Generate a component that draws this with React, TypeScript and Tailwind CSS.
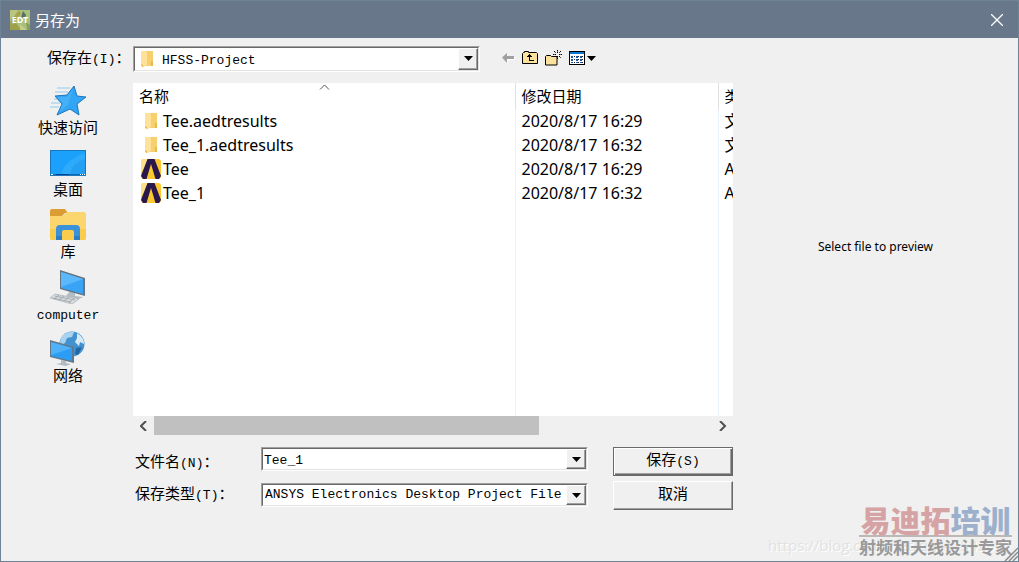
import { useState, type ReactNode } from "react";

const sidebarItems = [
  { label: "快速访问", icon: <QuickAccessIcon /> },
  { label: "桌面", icon: <DesktopIcon /> },
  { label: "库", icon: <LibraryIcon /> },
  { label: "computer", icon: <ComputerIcon /> },
  { label: "网络", icon: <NetworkIcon /> },
];

const files = [
  { name: "Tee.aedtresults", date: "2020/8/17 16:29", type: "文件夹", folder: true },
  { name: "Tee_1.aedtresults", date: "2020/8/17 16:32", type: "文件夹", folder: true },
  { name: "Tee", date: "2020/8/17 16:29", type: "ANSYS", folder: false },
  { name: "Tee_1", date: "2020/8/17 16:32", type: "ANSYS", folder: false },
];

function EdtIcon() {
  return (
    <svg width="20" height="20" viewBox="0 0 20 20" aria-hidden="true">
      <rect width="20" height="20" fill="#a9bf7c" />
      <path d="M0 0h8L3 8H0z" fill="#b9c67c" />
      <path d="M9 0L0 12v4L11 4z" fill="#a8a24c" />
      <path d="M0 15l6-2 5 7H0z" fill="#9fa04a" />
      <path d="M10 14l7 6h-7z" fill="#c3cf86" />
      <path d="M13 1l3 4-1 3h-4z" fill="#56706a" />
      <path d="M16 12l4 3v5h-3z" fill="#86a05c" />
      <text x="10" y="13" textAnchor="middle" fontSize="9" fontWeight="700" fill="#fff" fontFamily="Noto Sans">
        EDT
      </text>
    </svg>
  );
}

function FolderIcon() {
  return (
    <svg width="14" height="18" viewBox="0 0 14 18" aria-hidden="true">
      <path d="M4 1h9v15H4z" fill="#f6cf6f" />
      <path d="M11 11h2v5h-2z" fill="#e9b949" />
      <path d="M1 1h5l1 2v12l-4 2.500L1 15z" fill="#ffe199" />
      <path d="M1 14l2 1v2.500L1 15.500z" fill="#eebf55" />
    </svg>
  );
}

function AnsysIcon() {
  return (
    <svg width="20" height="20" viewBox="0 0 20 20" aria-hidden="true">
      <rect width="20" height="20" rx="3" fill="#fbc82f" />
      <path d="M0 3q0-3 3-3h5L0 14z" fill="#fde08a" />
      <path d="M6.500 0h7L20 17l-2 3h-3.500L10 5 5.500 20H2L0 17z" fill="#2a174c" />
    </svg>
  );
}

function QuickAccessIcon() {
  return (
    <svg width="38" height="32" viewBox="0 0 38 32" aria-hidden="true">
      <path d="M8 3h13M6 7h13M2 18h9M1 22h9M5 14h7" stroke="#8fcaf0" strokeWidth="1" />
      <path d="M25 1l3 10 9 1-9 7 2 11-9-6-13 6 5-11-7-8 12-1z" fill="#32a5f5" stroke="#1b78bd" strokeWidth="1" strokeLinejoin="round" />
      <path d="M24 4l-6 8-10 0 6 6-4 9 9-7z" fill="#58bafa" opacity=".5" />
    </svg>
  );
}

function DesktopIcon() {
  return (
    <svg width="36" height="26" viewBox="0 0 36 26" aria-hidden="true">
      <rect x=".5" y=".5" width="35" height="25" fill="#1ba1fb" stroke="#1877bd" />
      <path d="M11 24Q15 10 35 3v21z" fill="#2eaafb" />
      <path d="M20 24Q22 13 35 9v15z" fill="#249ff2" />
      <path d="M1 24h34v1H1z" fill="#0c6cb8" />
      <path d="M6 24h13v1H6z" fill="#063f8c" />
      <path d="M1 24h2v1H1zM30 24h1v1h-1zM32 24h1v1h-1zM34 24h1v1h-1z" fill="#fff" />
    </svg>
  );
}

function LibraryIcon() {
  return (
    <svg width="36" height="32" viewBox="0 0 36 32" aria-hidden="true">
      <path d="M0 2q0-2 2-2h13l3 4h-3l-3 3H0z" fill="#dc9d35" />
      <path d="M0 7h13l4-4h17q2 0 2 2v24q0 2-2 2H2q-2 0-2-2z" fill="#fbd56e" />
      <path d="M0 20h36v9q0 2-2 2H2q-2 0-2-2z" fill="#f9cc4b" />
      <path d="M6 31V20q0-4 4-4h16q4 0 4 4v11h-6v-8q0-2-2-2h-8q-2 0-2 2v8z" fill="#3c92d8" />
      <path d="M6 27h6v4H6zM24 27h6v4h-6z" fill="#2d7dc4" />
    </svg>
  );
}

function ComputerIcon() {
  return (
    <svg width="38" height="34" viewBox="0 0 38 34" aria-hidden="true">
      <path d="M21 21l5 2v3l8 1-4 2-13-3z" fill="#b5bdc4" />
      <path d="M11 0l25 8v18l-25-7z" fill="#657582" />
      <path d="M12 2l22 7v15l-22-6z" fill="#39a4f6" />
      <path d="M12 2l22 7L12 17z" fill="#5bb8fb" />
      <path d="M6 24l24 5-7 5-22-6z" fill="#d9dde0" stroke="#a5adb3" strokeWidth=".7" />
      <path d="M6 26l20 4M4 28l18 4M10 25l-5 4M15 26l-5 4M20 27l-5 4M25 28l-5 5" stroke="#929aa1" strokeWidth=".7" />
    </svg>
  );
}

function NetworkIcon() {
  return (
    <svg width="36" height="36" viewBox="0 0 36 36" aria-hidden="true">
      <circle cx="22" cy="13" r="12.500" fill="#4391cf" />
      <path d="M12 5q6-5 12-4l-2 5-5 1-2 5-4 2q-2-4 1-9z" fill="#a9d4ee" />
      <path d="M27 2q7 4 7 11l-4-2-1 4-4-4 2-4z" fill="#d8eaf5" />
      <path d="M26 17l6-1-4 8-3-1z" fill="#1f67a5" />
      <path d="M11 29l5 1v2l5 1-5 2-10-2 5-1z" fill="#b3bbc1" />
      <path d="M0 9l24 7v16L0 26z" fill="#637787" />
      <path d="M1 11l21 6v13L1 25z" fill="#2c9df4" />
      <path d="M1 11l21 6L1 24z" fill="#4fb1fa" />
    </svg>
  );
}

function BackIcon() {
  return (
    <svg width="13" height="12" viewBox="0 0 13 12" aria-hidden="true">
      <path d="M1 6.500L6 2v3h7v3H6v4z" fill="#fff" />
      <path d="M0 5.500L5 1v3h7v3H5v4z" fill="#a0a0a0" />
    </svg>
  );
}

function UpIcon() {
  return (
    <svg width="16" height="14" viewBox="0 0 16 14" aria-hidden="true">
      <path d="M.5 12.500V2.500l1-1h1v-1h4v1h8l1 1v10z" fill="#fbe29c" stroke="#000" />
      <path d="M7 3h1v1h1v1h1v1H8v3h4v1H7V6H5V5h1V4h1z" fill="#000" />
    </svg>
  );
}

function NewFolderIcon() {
  return (
    <svg width="17" height="16" viewBox="0 0 17 16" aria-hidden="true">
      <path d="M.5 15V6.500l1-1h4l1 1h5.500V15z" fill="#fbe29c" stroke="#000" />
      <path d="M12.500 0v3M12.500 6v3M8 4.500h3M14 4.500h3M9 1l2 2M16 1l-2 2M14 6l2 2" stroke="#000" strokeDasharray="1.500 .5" />
    </svg>
  );
}

function ViewIcon() {
  return (
    <svg width="28" height="14" viewBox="0 0 28 14" aria-hidden="true">
      <rect x=".5" y=".5" width="15" height="13" fill="#fff" stroke="#000" />
      <path d="M1 1h14v2H1z" fill="#0878d0" />
      <path d="M2 5h2v2H2zM2 8h2v2H2zM2 11h2v1H2zM7 5h2v2H7zM7 8h2v2H7zM7 11h2v1H7zM11 5h2v2h-2zM11 8h2v2h-2zM11 11h2v1h-2z" fill="#1c58a8" />
      <path d="M5 5h1v1H5zM5 8h1v1H5zM5 11h1v1H5zM9 5h1v1H9zM9 8h1v1H9zM9 11h1v1H9zM13 5h1v1h-1zM13 8h1v1h-1zM13 11h1v1h-1z" fill="#222" />
      <path d="M18 5h9l-4.500 5z" fill="#000" />
    </svg>
  );
}

function DropArrow() {
  return (
    <span className="pointer-events-none absolute inset-y-0 right-0 flex w-5 items-center justify-center border border-t-white border-l-white border-r-[#696969] border-b-[#696969] bg-[#f0f0f0] shadow-[inset_-1px_-1px_#a0a0a0]">
      <svg width="9" height="5" viewBox="0 0 9 5" aria-hidden="true">
        <path d="M0 0h9L4.500 5z" fill="#000" />
      </svg>
    </span>
  );
}

// sunken classic frame shared by the combo boxes
function Sunken({ children, className }: { children: ReactNode; className: string }) {
  return (
    <div className={`border border-t-[#a0a0a0] border-l-[#a0a0a0] border-r-white border-b-white ${className}`}>
      <div className="relative flex h-full items-center border border-t-[#696969] border-l-[#696969] border-r-[#e3e3e3] border-b-[#e3e3e3] bg-white">
        {children}
      </div>
    </div>
  );
}

function Label({ htmlFor, text, hotkey }: { htmlFor: string; text: string; hotkey: string }) {
  return (
    <label htmlFor={htmlFor} className="text-[15px] leading-5 whitespace-nowrap">
      {text}
      <span className="text-[13px]">({hotkey})</span>：
    </label>
  );
}

export default function App() {
  const [fileName, setFileName] = useState("Tee_1");

  return (
    <div className="relative flex min-h-screen flex-col overflow-hidden border border-[#6f8396] bg-[#f0f0f0] font-['Liberation_Mono','Noto_Sans_CJK_SC',monospace] text-black">
      <header className="flex h-[37px] items-center bg-[#687789] pr-px pl-[9px] text-white">
        <EdtIcon />
        <h1 className="ml-[5px] font-['Noto_Sans','Noto_Sans_CJK_SC',sans-serif] text-[15px] leading-5">另存为</h1>
        <button type="button" aria-label="关闭" className="ml-auto flex h-full w-10 items-center justify-center">
          <svg width="12" height="12" viewBox="0 0 12 12" aria-hidden="true">
            <path d="M0 0l12 12M12 0L0 12" stroke="#fff" strokeWidth="1.300" />
          </svg>
        </button>
      </header>

      <main className="grid flex-1 grid-cols-[132px_1fr_285px] grid-rows-[45px_1fr_auto]">
        <div className="flex items-center pb-[2px] pl-[46px]">
          <Label htmlFor="folder" text="保存在" hotkey="I" />
        </div>
        <div className="col-span-2 flex items-center pb-1">
          <Sunken className="h-[26px] w-[347px]">
            <span className="pl-[5px]">
              <FolderIcon />
            </span>
            <select id="folder" className="h-full flex-1 appearance-none bg-transparent pt-[3px] pl-2 text-[13px] outline-none">
              <option>HFSS-Project</option>
            </select>
            <DropArrow />
          </Sunken>
          <div className="ml-[22px] flex items-center gap-[7px] pb-[2px]">
            <button type="button" aria-label="返回"><BackIcon /></button>
            <button type="button" aria-label="向上一级"><UpIcon /></button>
            <button type="button" aria-label="新建文件夹"><NewFolderIcon /></button>
            <button type="button" aria-label="查看"><ViewIcon /></button>
          </div>
        </div>

        <nav className="flex flex-col gap-[5px] pl-[2px]">
          {sidebarItems.map((item) => (
            <button key={item.label} type="button" className="flex flex-col items-center">
              <span className="flex h-9 items-center">{item.icon}</span>
              <span className={item.label === "computer" ? "pt-px text-[13px] leading-5" : "pt-px text-[15px] leading-5"}>
                {item.label}
              </span>
            </button>
          ))}
        </nav>

        <section className="flex min-w-0 flex-col">
          <div className="relative flex flex-1 overflow-hidden bg-white font-['Noto_Sans','Noto_Sans_CJK_SC',sans-serif]">
            <svg className="absolute top-px left-[186px]" width="11" height="6" viewBox="0 0 11 6" aria-hidden="true">
              <path d="M1 5.500l4.500-4.500L10 5.500" fill="none" stroke="#555" />
            </svg>
            <table className="w-[785px] shrink-0 table-fixed text-left text-base leading-6 whitespace-nowrap">
              <colgroup>
                <col className="w-[382px]" />
                <col className="w-[203px]" />
                <col />
              </colgroup>
              <thead>
                <tr className="h-[26px] text-[15px]">
                  <th className="border-r border-[#e0e0e0] pl-[6px] font-normal">名称</th>
                  <th className="border-r border-[#e0e0e0] pl-[6px] font-normal">修改日期</th>
                  <th className="pl-[6px] font-normal">类型</th>
                </tr>
              </thead>
              <tbody>
                {files.map((file) => (
                  <tr key={file.name} className="h-6">
                    <td className="border-r border-[#e8f2fc] pl-2">
                      <span className="flex items-center gap-[2px]">
                        <span className="flex w-5 justify-center">{file.folder ? <FolderIcon /> : <AnsysIcon />}</span>
                        {file.name}
                      </span>
                    </td>
                    <td className="border-r border-[#e8f2fc] pl-[6px]">{file.date}</td>
                    <td className="pl-[6px]">{file.type}</td>
                  </tr>
                ))}
                <tr>
                  <td className="border-r border-[#e8f2fc]" />
                  <td className="border-r border-[#e8f2fc]" />
                  <td />
                </tr>
              </tbody>
            </table>
          </div>
          <div className="flex h-[19px] text-[#505050]">
            <button type="button" aria-label="向左滚动" className="flex w-[21px] items-center justify-center">
              <svg width="8" height="10" viewBox="0 0 8 10" aria-hidden="true">
                <path d="M6 0L1 5l5 5" fill="none" stroke="currentColor" strokeWidth="2" />
              </svg>
            </button>
            <div className="flex-1">
              <div className="h-full w-[69%] bg-[#c0c0c0]" />
            </div>
            <button type="button" aria-label="向右滚动" className="flex w-[21px] items-center justify-center">
              <svg width="8" height="10" viewBox="0 0 8 10" aria-hidden="true">
                <path d="M1 0l5 5-5 5" fill="none" stroke="currentColor" strokeWidth="2" />
              </svg>
            </button>
          </div>
        </section>

        <aside className="flex items-center justify-center pb-6 font-['Noto_Sans',sans-serif] text-xs">
          Select file to preview
        </aside>

        <form
          className="col-start-2 grid grid-cols-[126px_1fr_120px] items-start pt-3 pb-[51px] pl-[2px]"
          onSubmit={(e) => e.preventDefault()}
        >
          <div className="flex flex-col gap-3 pt-[7px]">
            <Label htmlFor="file-name" text="文件名" hotkey="N" />
            <Label htmlFor="file-type" text="保存类型" hotkey="T" />
          </div>
          <div className="mr-[25px] flex flex-col gap-3">
            <Sunken className="h-6">
              <input
                id="file-name"
                type="text"
                value={fileName}
                onChange={(e) => setFileName(e.target.value)}
                className="h-full min-w-0 flex-1 pt-[3px] pr-5 pl-px text-[13px] outline-none"
              />
              <DropArrow />
            </Sunken>
            <Sunken className="h-6">
              <select
                id="file-type"
                className="mr-5 h-full min-w-0 flex-1 appearance-none overflow-hidden bg-transparent pl-[2px] text-[13px] outline-none"
              >
                <option>ANSYS Electronics Desktop Project File</option>
              </select>
              <DropArrow />
            </Sunken>
          </div>
          <div className="flex flex-col gap-[5px]">
            <button
              type="submit"
              className="h-[29px] border border-[#696969] text-[15px] leading-5 shadow-[inset_1px_1px_#fff,inset_-1px_-1px_#696969,inset_-2px_-2px_#a0a0a0]"
            >
              保存<span className="text-[13px]">(S)</span>
            </button>
            <button
              type="button"
              className="h-[29px] border border-t-white border-l-white border-r-[#696969] border-b-[#696969] text-[15px] leading-5 shadow-[inset_-1px_-1px_#a0a0a0]"
            >
              取消
            </button>
          </div>
        </form>
      </main>

      {/* watermark */}
      <div className="pointer-events-none absolute right-[6px] bottom-1 font-['Noto_Sans_CJK_SC',sans-serif] whitespace-nowrap select-none">
        <p className="absolute right-0 bottom-0 font-['Open_Sans',sans-serif] text-[15px] leading-6 text-[#e2e2e2] [text-shadow:1px_1px_#fff]">
          https://blog.csdn.net/qq_41542947
        </p>
        <p className="relative border-b-2 border-[#bdb8b5] text-center text-[30px] leading-8 font-black text-[#d6a3a5]">
          易迪拓<span className="text-[#9cb0cc]">培训</span>
        </p>
        <p className="relative text-[17px] leading-5 font-bold text-[#999]">射频和天线设计专家</p>
      </div>
      <svg className="absolute right-0 bottom-0" width="14" height="14" viewBox="0 0 14 14" aria-hidden="true">
        <path d="M1 14L14 1M5 14l9-9M9 14l5-5" stroke="#8c8c8c" strokeWidth="1.500" />
      </svg>
    </div>
  );
}
